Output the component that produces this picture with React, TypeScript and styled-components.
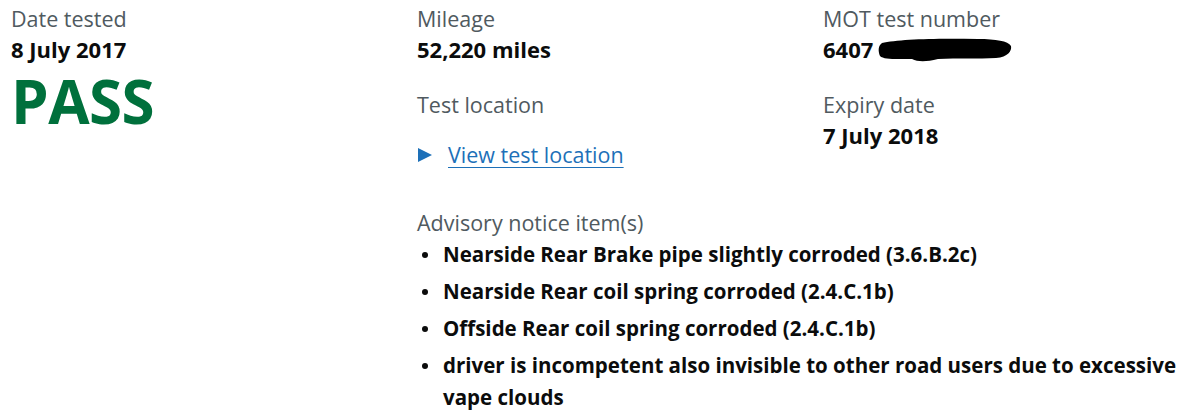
import React from "react";
import styled, { createGlobalStyle } from "styled-components";

const Global = createGlobalStyle`
  html, body { margin: 0; padding: 0; background: #ffffff; }
  body { font-family: "Open Sans", "Noto Sans", "Liberation Sans", sans-serif; color: #0b0c0c; }
`;

const Page = styled.div`
  display: grid;
  grid-template-columns: 406px minmax(0, 1fr);
  padding: 4px 11px 0 11px;
  width: 1200px;
  box-sizing: border-box;
`;

const Right = styled.div`
  display: grid;
  grid-template-columns: 406px minmax(0, 1fr);
  align-items: start;
`;

const Col = styled.div`
  display: flex;
  flex-direction: column;
`;

const Label = styled.div<{ $top?: number }>`
  font-size: 21.5px;
  line-height: 30px;
  color: #505a5f;
  margin-top: ${(p) => p.$top ?? 0}px;
`;

const Value = styled.div`
  font-size: 22px;
  line-height: 30px;
  font-weight: 700;
  color: #0b0c0c;
  display: flex;
  align-items: center;
`;

const Pass = styled.div`
  font-size: 60px;
  line-height: 60px;
  font-weight: 700;
  color: #00703c;
  margin-top: 7px;
  letter-spacing: -0.5px;
`;

const Details = styled.div`
  display: flex;
  align-items: center;
  margin-top: 20px;
  height: 30px;
  gap: 16px;
`;

const Arrow = styled.svg`
  width: 14px;
  height: 14px;
  flex: none;
  margin-left: 1px;
`;

const Link = styled.a`
  font-size: 21.5px;
  line-height: 30px;
  color: #1d70b8;
  text-decoration: underline;
  text-underline-offset: 4px;
  text-decoration-thickness: 1px;
`;

const Advisory = styled.div`
  grid-column: 1 / span 2;
  margin-top: 38px;
  display: flex;
  flex-direction: column;
`;

const List = styled.ul`
  list-style: none;
  margin: 0;
  padding: 0;
`;

const Item = styled.li`
  position: relative;
  padding-left: 26px;
  margin-top: 5px;
  font-size: 20.5px;
  line-height: 32px;
  font-weight: 700;
  color: #0b0c0c;
  &:first-child { margin-top: 0; }
  &::before {
    content: "";
    position: absolute;
    left: 5px;
    top: 14px;
    width: 6px;
    height: 6px;
    border-radius: 50%;
    background: #0b0c0c;
  }
`;

const Redact = styled.svg`
  width: 134px;
  height: 26px;
  margin-left: 5px;
  margin-top: 2px;
`;

const advisories = [
  "Nearside Rear Brake pipe slightly corroded (3.6.B.2c)",
  "Nearside Rear coil spring corroded (2.4.C.1b)",
  "Offside Rear coil spring corroded (2.4.C.1b)",
  "driver is incompetent also invisible to other road users due to excessive vape clouds",
];

export default function App() {
  return (
    <>
      <Global />
      <Page>
        <Col>
          <Label>Date tested</Label>
          <Value>8 July 2017</Value>
          <Pass>PASS</Pass>
        </Col>
        <Right>
          <Col>
            <Label>Mileage</Label>
            <Value>52,220 miles</Value>
            <Label $top={26}>Test location</Label>
            <Details>
              <Arrow viewBox="0 0 14 14">
                <path d="M0 0 L14 7 L0 14 Z" fill="#1d70b8" />
              </Arrow>
              <Link href="#">View test location</Link>
            </Details>
          </Col>
          <Col>
            <Label>MOT test number</Label>
            <Value>
              6407
              <Redact viewBox="0 0 134 26">
                <path
                  d="M4 6 C20 2 60 1 100 2 C118 2 130 4 133 9 C134 14 130 20 118 21 C100 22 80 21 60 22 C48 25 40 25 34 22 C20 22 6 23 2 19 C0 14 0 9 4 6 Z"
                  fill="#000"
                />
              </Redact>
            </Value>
            <Label $top={26}>Expiry date</Label>
            <Value>7 July 2018</Value>
          </Col>
          <Advisory>
            <Label>Advisory notice item(s)</Label>
            <List>
              {advisories.map((a) => (
                <Item key={a}>{a}</Item>
              ))}
            </List>
          </Advisory>
        </Right>
      </Page>
    </>
  );
}
